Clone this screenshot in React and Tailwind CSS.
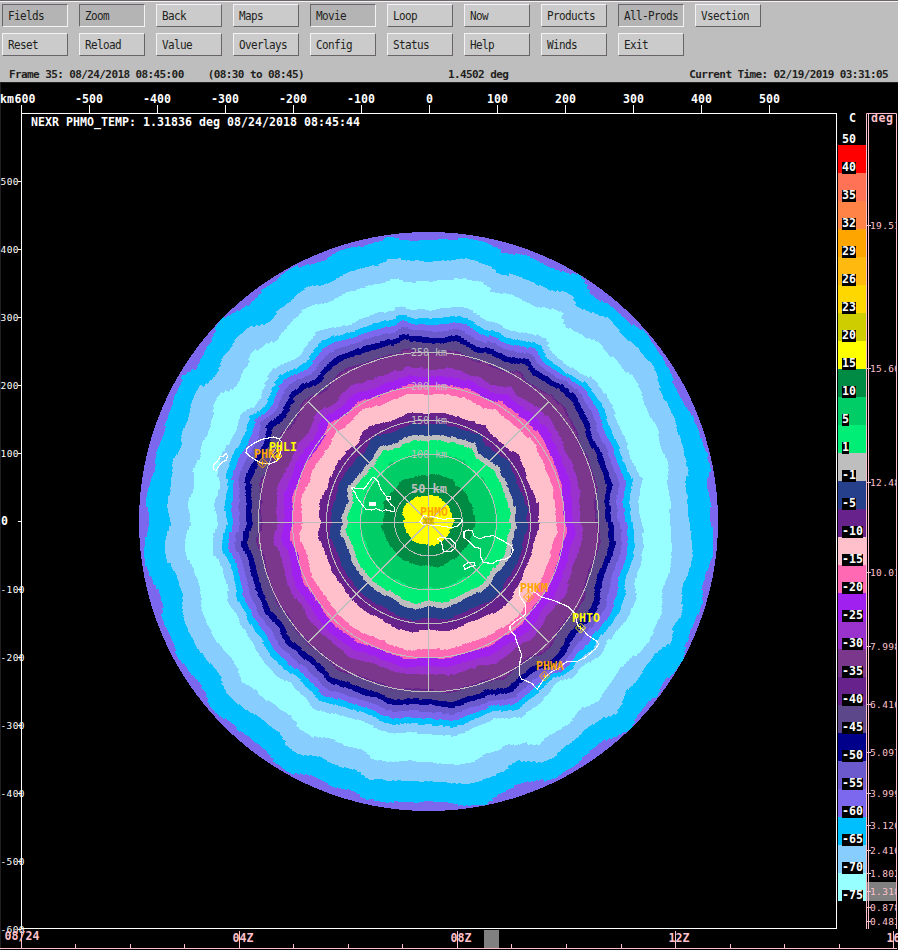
import React from 'react';

const MONO = "font-['Liberation_Mono',monospace]";
const DEJAVU = "font-['DejaVu_Sans_Mono',monospace]";

const BUTTONS = [
  ['Fields', 'Zoom', 'Back', 'Maps', 'Movie', 'Loop', 'Now', 'Products', 'All-Prods', 'Vsection'],
  ['Reset', 'Reload', 'Value', 'Overlays', 'Config', 'Status', 'Help', 'Winds', 'Exit'],
];
const PRESSED = ['Fields', 'Zoom', 'Movie', 'All-Prods'];

const LEGEND = [
  ['#ff0000', '40'], ['#ff7256', '35'], ['#ff8247', '32'], ['#ffa500', '29'], ['#ffb90f', '26'],
  ['#ffd700', '23'], ['#cdcd00', '20'], ['#ffff00', '15'], ['#008b45', '10'], ['#00cd66', '5'],
  ['#00ee76', '1'], ['#bebebe', '-1'], ['#27408b', '-5'], ['#68228b', '-10'], ['#ffc0cb', '-15'],
  ['#ff69b4', '-20'], ['#a020f0', '-25'], ['#9a32cd', '-30'], ['#7a378b', '-35'], ['#68228b', '-40'],
  ['#5d478b', '-45'], ['#00008b', '-50'], ['#6a5acd', '-55'], ['#7b68ee', '-60'], ['#00bfff', '-65'],
  ['#87ceff', '-70'], ['#97ffff', '-75'],
];

const ELEVATIONS = [
  [225, '19.51'], [368, '15.60'], [482, '12.48'], [572, '10.01'], [646, '7.998'], [704, '6.410'],
  [752, '5.097'], [793, '3.999'], [825, '3.120'], [850, '2.410'], [873, '1.802'], [891, '1.318'],
  [907, '0.878'], [921, '0.483'],
];

const CX = 428.5;
const CY = 521.8;

// Isotherm contours in thirds of a pixel, one list per quadrant: NW, SW, SE, NE.
const ORIGINS = [[895, 892], [895, 22], [11, 22], [11, 892]];
const CONTOURS = [
  { base: 845, q: [
    '900,46 860,50 820,44 770,40 740,50 700,68 660,70 620,84 580,112 540,120 495,128 460,150 430,178 390,205 365,232 335,250 300,268 275,288 255,320 240,350 222,380 200,430 155,458 145,490 128,520 118,560 107,590 106,620 85,670 82,700 66,750 55,790 50,830 55,870',
    '55,23 48,60 44,100 46,150 60,190 85,230 98,270 92,310 108,345 125,375 135,410 160,450 190,490 225,530 235,570 270,610 310,625 340,660 390,690 410,710 430,735 480,775 540,780 580,800 620,820 665,825 710,855 760,867 810,862 860,862',
    '12,858 60,862 120,872 180,868 220,838 270,815 330,797 375,795 420,770 450,750 490,715 540,675 590,658 625,635 640,600 670,565 700,545 720,500 750,470 775,430 780,390 800,345 810,310 835,270 830,220 840,180 862,130 868,90 862,50',
    '858,890 858,840 845,800 842,770 855,740 850,690 830,640 812,590 785,550 770,520 750,480 728,430 708,390 680,350 640,305 610,295 580,265 545,240 500,215 485,180 465,155 430,143 380,130 340,108 290,92 235,85 220,70 170,50 120,40 90,46 50,42'] },
  { base: 778, q: [
    '895,113 860,110 820,104 780,104 740,120 700,133 660,143 630,160 590,180 540,184 510,205 480,235 450,255 425,285 400,300 360,305 330,330 310,360 285,385 270,410 260,450 235,480 200,490 185,525 175,560 165,600 155,635 155,665 135,700 122,745 120,790 115,840',
    '120,23 108,60 107,110 118,150 140,190 157,240 155,290 165,330 185,370 210,410 240,450 270,485 285,530 315,565 360,590 400,620 445,650 470,690 510,720 570,727 610,750 680,765 720,795 770,800 830,800',
    '12,797 60,803 120,808 170,795 230,770 280,740 350,740 385,730 410,700 450,675 490,640 530,610 570,600 590,575 605,530 630,510 655,475 680,430 700,405 735,385 745,340 770,300 770,220 785,180 803,130 802,80',
    '793,890 785,820 778,780 790,730 780,680 760,620 740,560 715,510 700,470 690,430 655,390 610,345 585,320 550,285 500,265 460,250 440,215 410,200 375,195 330,175 270,155 220,145 195,125 150,108 115,103 70,108'] },
  { base: 721, q: [
    '895,170 840,172 780,163 740,180 690,195 640,210 610,228 560,240 530,250 500,280 470,310 440,345 400,360 370,385 350,420 330,455 315,490 270,510 250,535 245,580 230,630 215,660 210,700 190,740 190,790 175,840',
    '180,23 168,60 167,110 185,160 210,215 212,280 230,330 255,370 280,405 320,455 335,500 380,530 425,565 480,600 510,640 545,665 600,672 650,695 700,705 730,735 770,747 830,738',
    '12,740 80,750 140,743 180,715 250,695 300,685 340,688 380,655 430,630 470,580 520,560 555,510 590,460 640,415 670,380 690,335 710,300 712,230 735,160 742,100',
    '735,890 735,830 722,770 735,720 710,670 700,620 675,570 655,520 630,460 590,430 560,395 520,355 480,340 420,305 410,265 380,250 330,245 270,215 205,202 170,170 110,163 60,167'] },
  { base: 633, q: [
    '895,258 850,255 810,247 770,262 720,275 660,303 600,310 560,325 530,370 500,400 440,425 405,470 390,520 370,550 330,570 315,615 300,650 275,690 265,740 265,790 255,840',
    '262,23 250,70 252,120 275,160 292,215 290,265 320,300 345,350 370,395 400,440 435,480 480,505 520,545 560,585 620,600 690,615 730,635 780,660 830,655',
    '12,655 90,665 140,640 200,615 290,605 330,575 370,540 400,500 440,490 480,450 530,425 550,380 580,340 605,310 632,260 630,200 645,150 658,80',
    '650,890 637,830 650,760 620,700 600,640 575,580 550,520 510,470 490,455 430,430 380,385 365,345 320,325 260,320 210,295 170,280 130,250 60,250'] },
  { base: 551, q: [
    '895,340 820,330 770,350 700,370 640,387 600,415 560,460 510,480 470,525 450,570 410,605 400,650 375,700 355,740 342,790 350,840',
    '348,23 336,90 355,140 368,200 385,250 410,300 450,350 465,385 510,420 560,460 595,500 650,520 700,540 745,550 790,576 850,568',
    '12,568 80,580 130,560 190,545 260,530 300,490 340,465 390,450 420,420 440,380 470,345 500,305 520,270 530,200 550,150 573,85',
    '562,890 550,830 562,770 540,710 510,650 490,590 460,530 430,490 380,470 330,435 310,405 250,395 200,375 150,365 100,333 60,340'] },
  { base: 409, q: [
    '895,482 840,477 790,497 740,518 690,525 650,570 600,595 580,640 560,680 530,710 515,760 487,810',
    '490,23 480,70 505,130 515,190 550,240 580,290 620,335 670,370 690,390 750,400 820,430',
    '12,430 60,432 120,415 200,395 250,360 290,325 330,270 370,220 390,160 410,100 427,60',
    '418,890 412,830 415,780 380,700 350,640 310,590 260,560 230,530 180,525 120,490 60,480'] },
  { base: 325, q: [
    '895,567 840,563 790,590 740,595 700,620 680,660 640,690 610,740 595,790 568,830',
    '572,23 565,70 590,130 620,190 660,245 710,290 760,320 830,350',
    '12,345 70,348 140,322 200,300 250,262 285,200 310,140 325,90 340,50',
    '342,890 335,820 305,760 285,700 250,670 200,635 180,600 120,590 60,563'] },
  { base: 258, q: [
    '895,633 850,630 800,655 750,665 720,715 680,760 655,790 655,830 635,880',
    '640,23 630,50 655,110 690,180 740,225 800,260 850,283',
    '12,275 60,280 120,255 180,222 210,180 250,135 262,80 275,40',
    '270,890 268,830 235,760 210,715 160,690 150,655 100,645 50,630'] },
  { base: 77, q: [
    '895,812 860,820 825,845 820,888',
    '822,25 830,50 850,80',
    '12,92 50,80 75,50',
    '85,890 70,850 45,820'] },
];

const BANDS = [
  [845, '#00bfff'], [778, '#87ceff'], [721, '#97ffff'], [633, '#87ceff'], [607, '#00bfff'],
  [589, '#7b68ee'], [570, '#6a5acd'], [551, '#00008b'], [534, '#5d478b'], [508, '#68228b'],
  [503, '#7a378b'], [457, '#9a32cd'], [434, '#a020f0'], [409, '#ff69b4'], [381, '#ffc0cb'],
  [325, '#68228b'], [291, '#27408b'], [258, '#bebebe'], [242, '#00ee76'], [202, '#00cd66'],
  [139, '#008b45'], [77, '#ffff00'],
];

const BINS = 360;

function profile(contour) {
  const pts = [];
  contour.q.forEach((list, i) => {
    const [ox, oy] = ORIGINS[i];
    list.split(' ').forEach((p) => {
      const [x, y] = p.split(',').map(Number);
      let a = (Math.atan2(y - oy, x - ox) * 180) / Math.PI;
      if (a < 0) a += 360;
      pts.push([a, Math.hypot(x - ox, y - oy)]);
    });
  });
  pts.sort((a, b) => a[0] - b[0]);
  const n = pts.length;
  const ring = [[pts[n - 1][0] - 360, pts[n - 1][1]], ...pts, [pts[0][0] + 360, pts[0][1]]];
  const out = [];
  let k = 0;
  for (let i = 0; i < BINS; i++) {
    const a = ((i + 0.5) * 360) / BINS;
    while (k < ring.length - 2 && ring[k + 1][0] < a) k++;
    const [a0, r0] = ring[k];
    const [a1, r1] = ring[k + 1];
    out.push(r0 + ((r1 - r0) * (a - a0)) / (a1 - a0 || 1));
  }
  return out;
}

const PROFILES = CONTOURS.map((c) => ({ base: c.base, r: profile(c) }));

function noise(n) {
  const v = Math.sin(n) * 43758.5453;
  return v - Math.floor(v) - 0.5;
}

function bandPath(base, seed) {
  let j = 0;
  while (j < PROFILES.length - 2 && PROFILES[j + 1].base > base) j++;
  const hi = PROFILES[j];
  const lo = PROFILES[j + 1];
  const t = (base - lo.base) / (hi.base - lo.base);
  // Inner bands get coarser steps, since a fixed arc length spans more degrees there.
  const step = base > 450 ? 3 : base > 200 ? 5 : 8;
  let d = '';
  for (let i = 0; i < BINS; i++) {
    const fine = noise(i * 12.9898 + seed * 78.233) * 1.1;
    const coarse = noise(Math.floor(i / step) * 39.425 + 5.1) * 2.2;
    const r = Math.min(289.5, (lo.r[i] + (hi.r[i] - lo.r[i]) * t) / 3 + fine + coarse);
    for (const e of [i, i + 1]) {
      const a = (e * 2 * Math.PI) / BINS;
      d += `${d ? 'L' : 'M'}${(CX + r * Math.cos(a)).toFixed(1)} ${(CY + r * Math.sin(a)).toFixed(1)}`;
    }
  }
  return d + 'Z';
}

const COAST = [
  ['translate(130 225) scale(.33333)', [
    'M372,655 395,643 412,640 430,636 447,641 455,650 452,665 450,690 440,708 420,717 395,714 378,706 360,694 348,682 352,668Z',
    'M288,686 292,692 290,705 275,712 262,730 258,737 250,732 252,718 262,708 270,695 280,694Z']],
  ['translate(340 440) scale(.33333)', [
    'M34,143 72,147 97,113 104,114 114,124 122,147 130,158 140,171 152,170 150,180 138,175 152,192 165,204 162,216 152,213 136,209 128,214 108,206 96,210 78,208 52,175 45,158Z',
    'M90,188 106,188 106,195 88,195Z',
    'M240,245 252,227 265,229 275,230 310,238 330,236 362,235 367,243 352,258 335,263 290,256 250,254Z',
    'M292,297 300,292 330,296 345,310 347,322 335,333 310,335 307,318 304,305Z',
    'M372,275 385,270 397,272 402,288 420,297 435,290 460,287 490,303 515,318 520,330 512,348 495,358 470,362 460,370 430,368 422,350 422,325 405,322 385,303 372,292Z',
    'M370,377 385,368 402,367 406,377 390,380 375,388Z']],
  ['translate(425 515) scale(.33333)', [
    'M283,240 285,218 298,213 315,222 350,246 385,256 430,275 450,295 458,330 475,345 487,360 518,380 520,388 510,403 480,428 455,440 425,440 400,460 380,470 362,485 345,510 337,523 320,505 290,492 283,480 285,440 290,420 283,400 275,380 270,362 255,345 255,333 270,320 300,300 302,270 290,252Z']],
];

const STATIONS = [
  ['PHKI', 254, 458, 262.5, 463, '#ffa500'],
  ['PHLI', 269, 451, 277, 456, '#ffff00'],
  ['PHMO', 420, 516, 428.5, 521, '#ffa500'],
  ['PHKM', 520, 592, 528.5, 597, '#ffa500'],
  ['PHTO', 572, 622, 580.5, 628, '#ffff00'],
  ['PHWA', 536, 670, 544.5, 676, '#ffa500'],
];

const KM = [-500, -400, -300, -200, -100, 0, 100, 200, 300, 400, 500];

function Button({ label }) {
  const look = PRESSED.includes(label)
    ? 'bg-[#b4b4b4] border-t-[#686468] border-l-[#686468] border-b-[#f4f2f4] border-r-[#f4f2f4]'
    : 'bg-[#cbcbcb] border-t-[#f4f2f4] border-l-[#f4f2f4] border-b-[#686468] border-r-[#686468]';
  return (
    <button className={`flex h-[23px] w-[66px] items-center whitespace-nowrap border pl-[5px] text-left text-[11px] leading-none tracking-[-0.62px] text-[#231f20] ${DEJAVU} ${look}`}>
      <span className="translate-y-px scale-y-110">{label}</span>
    </button>
  );
}

function Bold({ x, y, children, fill = '#fff', width }) {
  return (
    <text x={x} y={y} fill={fill} textLength={width} className={`${DEJAVU} text-[11.6px] font-bold`} xmlSpace="preserve">
      {children}
    </text>
  );
}

function Radar() {
  return (
    <svg width="837" height="847" viewBox="0 82 837 847" className="block shrink-0 overflow-visible">
      <circle cx={CX} cy={CY - 0.3} r="289.5" fill="#7b68ee" shapeRendering="crispEdges" />
      {BANDS.map(([base, color], i) => (
        <path key={base} d={bandPath(base, i + 1)} fill={color} shapeRendering="crispEdges" />
      ))}

      <g stroke="#bebebe" fill="none" shapeRendering="crispEdges">
        {[34, 68, 102, 136, 170].map((r) => <circle key={r} cx={CX} cy="522" r={r} />)}
        <path d="M258 522.5H599M428.5 352V692M308.500 402L548.500 642M308.500 642L548.500 402" />
      </g>
      {['50 km', '100 km', '150 km', '200 km', '250 km'].map((label, i) => (
        <text key={label} x="411" y={(i === 0 ? 493 : 492) - i * 34} fill="#bebebe" textLength="36" className={`${DEJAVU} ${i === 0 ? 'text-[12px] font-bold' : 'text-[10px]'}`}>
          {label}
        </text>
      ))}

      {COAST.map(([transform, paths]) => (
        <g key={transform} transform={transform} stroke="#fff" strokeWidth="3.4" fill="none" shapeRendering="crispEdges">
          {paths.map((d) => <path key={d} d={d} fill={d.startsWith('M90') ? '#fff' : 'none'} />)}
        </g>
      ))}
      {STATIONS.map(([name, tx, ty, x, y, color]) => (
        <g key={name}>
          <path d={`M${x} ${y - 5}l5 5l-5 5l-5 -5zM${x - 2.5} ${y}h5M${x} ${y - 2.500}v5`} stroke={color} fill="none" />
          {name === 'PHMO' && <path d="M423 518l3 3l-3 3m11 -6l-3 3l3 3m-8 -5h5v4h-5z" stroke="#cdad00" fill="none" strokeWidth="1.500" />}
          <Bold x={tx} y={ty} fill={color} width={28}>{name}</Bold>
        </g>
      ))}

      <rect x="21.5" y="113.5" width="815" height="815" fill="none" stroke="#fff" />
      <path d="M0.500 82V950M0 82.500H898" stroke="#231f20" />
      <path d="M21.500 105V113" stroke="#fff" />
      {KM.map((km) => {
        const x = Math.round(429 + km * 0.68);
        const label = String(km);
        return (
          <g key={km}>
            <path d={`M${x + 0.5} 105V113`} stroke="#fff" />
            <Bold x={km < 0 ? x - 14 : x + 0.5 - label.length * 3.5} y={103} width={label.length * 7}>{label}</Bold>
          </g>
        );
      })}
      <Bold x={0} y={103} width={14}>km</Bold>
      <Bold x={14.5} y={103} width={21}>600</Bold>
      <Bold x={31} y={126} width={329}>NEXR PHMO_TEMP: 1.31836 deg 08/24/2018 08:45:44</Bold>

      {[500, 400, 300, 200, 100, -100, -200, -300, -400, -500, -600].map((km) => {
        const y = Math.round(521 - km * 0.68);
        return (
          <g key={km}>
            <text x="0.500" y={y + 3.5} fill="#fff" textLength={km < 0 ? 24 : 18} className={`${DEJAVU} text-[9.5px]`}>{km}</text>
            <path d={`M18 ${y + 0.5}H21`} stroke="#fff" />
          </g>
        );
      })}
      <Bold x={1} y={525}>0</Bold>
      <path d="M18 521.500H21" stroke="#fff" />
    </svg>
  );
}

function Legend() {
  return (
    <div className={`flex w-[29px] shrink-0 flex-col pl-px text-[11.6px] font-bold leading-none text-white ${DEJAVU}`}>
      <div className="flex h-[63px] flex-col pl-[4px]">
        <span className="pl-[7px] pt-[31px]">C</span>
        <span className="pt-[9px]">50</span>
      </div>
      {LEGEND.map(([color, label]) => (
        <div key={label} className="h-7 shrink-0 pl-[4px] pt-[17px]" style={{ backgroundColor: color }}>
          <span className="relative flex h-3 w-fit items-center bg-black">{label}</span>
        </div>
      ))}
    </div>
  );
}

function Elevations() {
  return (
    <svg width="31" height="847" viewBox="866 82 31 847" className="block shrink-0 overflow-hidden">
      <rect x="867" y="882" width="30" height="19" fill="#808080" />
      <text x="871" y="121.500" fill="#ffc0cb" textLength="22" className={`${DEJAVU} text-[11.6px] font-bold`}>deg</text>
      {ELEVATIONS.map(([y, label]) => (
        <g key={label}>
          <path d={`M866 ${y + 0.5}H871`} stroke="#ffc0cb" />
          <text x="870" y={y + 3.5} fill="#ffc0cb" textLength="30" className={`${DEJAVU} text-[9.5px]`}>{label}</text>
        </g>
      ))}
      <path d="M866.500 929V113.500H896.500V929M868.500 113V929" stroke="#ffc0cb" fill="none" />
    </svg>
  );
}

function Timeline() {
  const majors = [[21, '08/24', 4.5, 940], [239, '04Z', 232.5, 942], [457, '08Z', 450.5, 942], [675, '12Z', 668.5, 942], [893, '16Z', 886.5, 942]];
  const minors = [75, 130, 184, 293, 348, 402, 511, 566, 621, 730, 784, 839];
  return (
    <svg width="898" height="21" viewBox="0 929 898 21" className="relative block overflow-hidden">
      <rect x="484" y="930" width="15" height="18" fill="#808080" />
      <g stroke="#ffc0cb">
        <path d="M0 948.500H897" />
        {majors.map(([x]) => <path key={x} d={`M${x + 0.5} 931V948`} />)}
        {minors.map((x) => <path key={x} d={`M${x + 0.5} 944V948`} />)}
      </g>
      {majors.map(([x, label, tx, ty]) => (
        <Bold key={x} x={tx} y={ty} fill="#ffc0cb" width={label.length * 7}>{label}</Bold>
      ))}
    </svg>
  );
}

export default function App() {
  return (
    <div className="flex h-[950px] w-[898px] flex-col overflow-hidden bg-black">
      <header className="h-[82px] shrink-0 border-t border-[#686468] bg-[#bebebe]">
        <div className="flex h-full flex-col border-t border-[#f4f2f4] pt-[2px]">
          <div className="flex flex-col gap-1.5 pl-0.5">
            {BUTTONS.map((row) => (
              <div key={row[0]} className="flex gap-[11px]">
                {row.map((label) => <Button key={label} label={label} />)}
              </div>
            ))}
          </div>
          <div className={`grid grow grid-cols-[439px_1fr_auto] items-end whitespace-pre pb-px pl-[9px] pr-[10px] text-[11px] font-bold leading-[13px] tracking-[-0.6px] text-[#231f20] ${DEJAVU}`}>
            <span>{'Frame 35: 08/24/2018 08:45:00    (08:30 to 08:45)'}</span>
            <span>1.4502 deg</span>
            <span>Current Time: 02/19/2019 03:31:05</span>
          </div>
        </div>
      </header>
      <main className="flex h-[847px] shrink-0">
        <Radar />
        <Legend />
        <Elevations />
      </main>
      <Timeline />
    </div>
  );
}
